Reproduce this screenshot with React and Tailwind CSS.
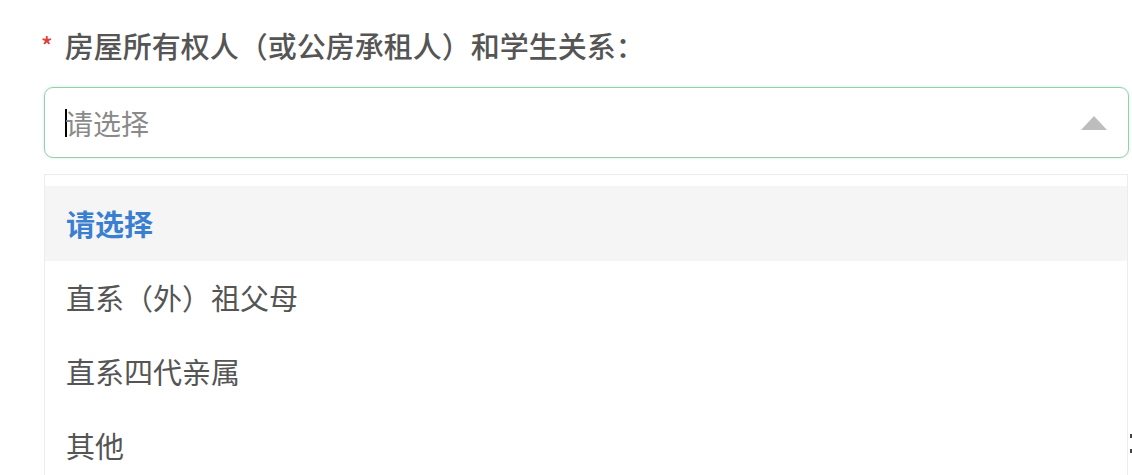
export default function App() {
  const items = ["直系（外）祖父母", "直系四代亲属", "其他"];
  return (
    <div className="relative w-[1132px] h-[475px] overflow-hidden bg-white font-['Noto_Sans_CJK_SC','Noto_Sans',sans-serif]">
      <div className="pt-[26px] pl-[41px] flex items-center h-[63px] text-[29px] leading-[36px] font-medium text-[#555]">
        <span className="text-[#e0403a] text-[24px] mr-[12px] leading-[36px]">*</span>
        <span>房屋所有权人（或公房承租人）和学生关系：</span>
      </div>
      <div className="ml-[44px] mr-[3px] mt-[24px] h-[71px] rounded-[9px] border-[1.5px] border-[#94cfae] shadow-[0_0_3px_rgba(120,200,160,0.35)] flex items-center pl-[20px] pr-[20px]">
        <span className="w-[2px] h-[28px] bg-black -mr-[2px]" />
        <span className="text-[28px] text-[#8a8a8a] flex-1">请选择</span>
        <svg width="26" height="14" viewBox="0 0 26 14" className="mr-[1px]">
          <polygon points="13,0 26,14 0,14" fill="#bdbdbd" />
        </svg>
      </div>
      <div className="ml-[44px] mr-[4px] mt-[16px] border border-[#ececec] pt-[11px] bg-white">
        <div className="h-[75px] bg-[#f5f5f5] flex items-center pl-[21px] text-[29px] font-bold text-[#3a7fd0]">
          请选择
        </div>
        {items.map((t) => (
          <div key={t} className="h-[74px] flex items-center pl-[21px] text-[29px] text-[#555]">
            {t}
          </div>
        ))}
      </div>
      <span className="absolute left-[1130px] top-[434px] w-[2px] h-[4px] bg-[#444]" />
      <span className="absolute left-[1130px] top-[449px] w-[2px] h-[4px] bg-[#444]" />
    </div>
  );
}
